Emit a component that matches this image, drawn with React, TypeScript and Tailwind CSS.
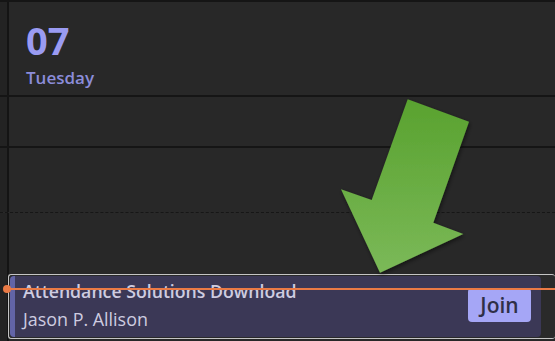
import React from 'react';

const font = { fontFamily: '"Open Sans", "Noto Sans", sans-serif' };

const Row: React.FC<{ h: string; line?: 'solid' | 'dashed'; children?: React.ReactNode }> = ({ h, line = 'solid', children }) => (
  <div className={`flex ${h} ${line === 'solid' ? 'border-b-2 border-[#151515]' : 'border-b border-dashed border-[#161616]'}`}>
    <div className="w-[9px] shrink-0 bg-[#232323] border-r-2 border-[#141414]" />
    <div className="flex-1 min-w-0">{children}</div>
  </div>
);

const Arrow: React.FC = () => (
  <svg className="absolute left-0 top-0 pointer-events-none" width="555" height="341" viewBox="0 0 555 341">
    <defs>
      <linearGradient id="g" x1="0" y1="0" x2="0" y2="1">
        <stop offset="0" stopColor="#59a22f" />
        <stop offset="1" stopColor="#7bb958" />
      </linearGradient>
      <filter id="s" x="-20%" y="-20%" width="140%" height="140%">
        <feDropShadow dx="1" dy="2" stdDeviation="2" floodColor="#000" floodOpacity="0.5" />
      </filter>
    </defs>
    <polygon
      points="407.7,99.3 469,121.7 433.3,222.7 463.3,234 380,272.7 341,189.3 371.7,200"
      fill="url(#g)"
      filter="url(#s)"
    />
  </svg>
);

export default function App() {
  return (
    <div className="relative w-[555px] h-[341px] overflow-hidden bg-[#282828]" style={font}>
      <div className="h-[2px] bg-[#151515]" />
      <Row h="h-[95px]">
        <div className="pl-[17px] pt-[18px]">
          <div className="text-[38px] leading-[40px] font-bold text-[#9a9bf2]">07</div>
          <div className="mt-[8px] text-[17px] leading-[20px] font-semibold text-[#8c8dda]">Tuesday</div>
        </div>
      </Row>
      <Row h="h-[51px]" />
      <Row h="h-[65px]" line="dashed" />
      <Row h="h-[62px]" line="dashed" />
      <div className="absolute left-0 top-[274px] w-[555px] h-[67px] flex">
        <div className="w-[9px] shrink-0 bg-[#232323] border-r-2 border-[#141414]" />
        <div className="flex-1 h-[65px] -ml-[1px] rounded-[3px] border border-[#c4c4c4] border-r-0 p-[1px] bg-[#2a2a2a] flex">
          <div className="w-[531px] h-full flex rounded-[4px] bg-[#3b3856] overflow-hidden border-l-[5px] border-[#6264a7]">
            <div className="flex-1 pl-[8px] pt-[4px] text-[#cecce0]">
              <div className="text-[17.7px] leading-[22px] font-semibold whitespace-nowrap">Attendance Solutions Download</div>
              <div className="text-[17.9px] leading-[24px] mt-[5px] whitespace-nowrap">Jason P. Allison</div>
            </div>
            <div className="pr-[10px] pt-[12px]">
              <button className="w-[63px] h-[34px] rounded-[4px] bg-[#a5a6f6] text-[#2f2f47] text-[21px] font-semibold leading-none">
                Join
              </button>
            </div>
          </div>
        </div>
      </div>
      <div className="absolute left-[3px] top-[285px] w-[8px] h-[8px] rounded-full bg-[#ea7a45]" />
      <div className="absolute left-[8px] top-[288px] w-[547px] h-[2px] bg-[#ea7a45]" />
      <Arrow />
    </div>
  );
}
